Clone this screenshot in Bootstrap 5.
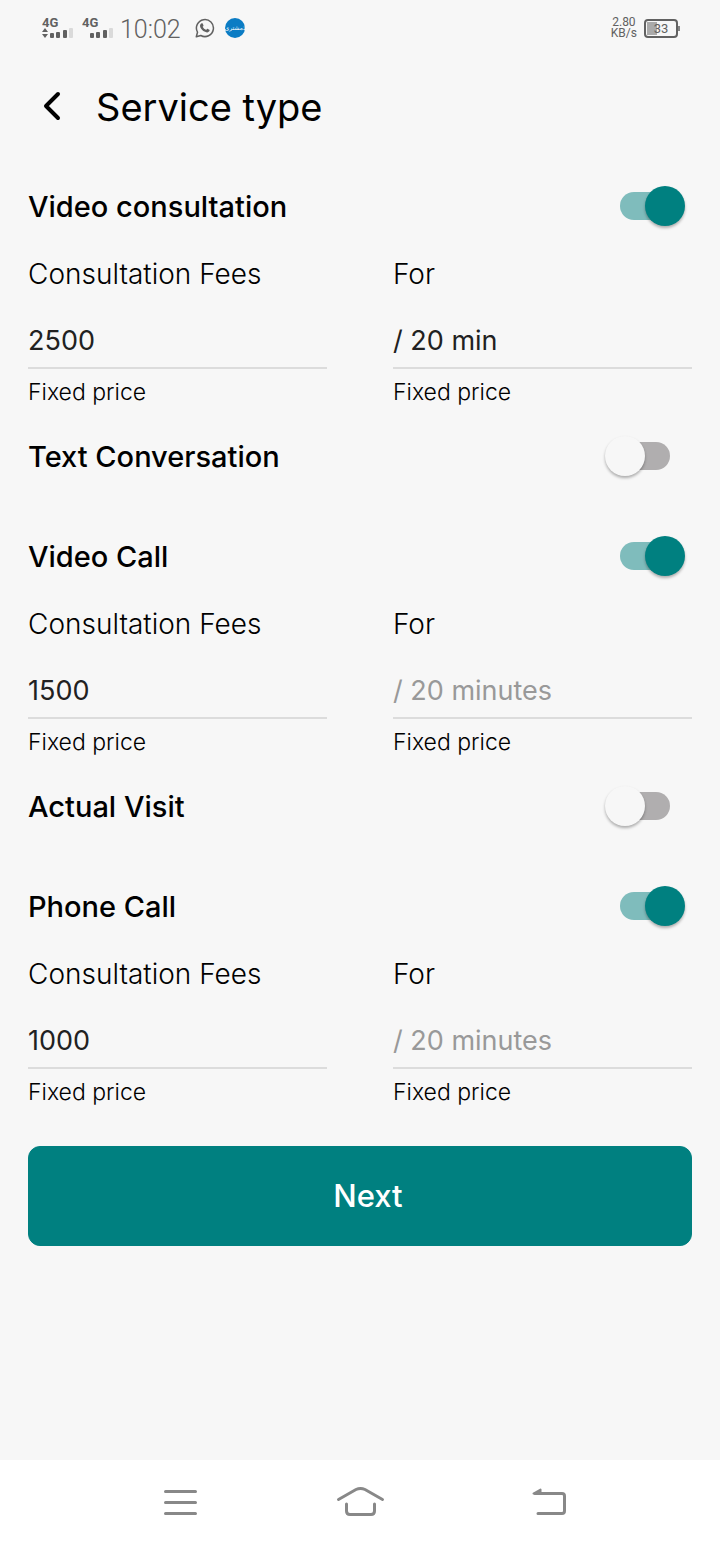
<!DOCTYPE html>
<html lang="en">
<head>
<meta charset="utf-8">
<meta name="viewport" content="width=device-width, initial-scale=1">
<title>Service type</title>
<link rel="stylesheet" href="https://cdn.jsdelivr.net/npm/bootstrap@5.3.0/dist/css/bootstrap.min.css">
<style>
  :root { --teal: #008080; --page: #f7f7f7; }
  body { background: var(--page); color: #000; font-family: Inter, sans-serif; }
  svg { display: block; flex: none; }

  .status-bar { height: 56px; padding: 0 40px 0 42px; color: #616161; font-family: Roboto, sans-serif; }
  .signals { gap: 8px; }
  .clock { font-size: 25px; line-height: 32px; margin: 3px 14px 0 6px; font-weight: 300; }
  .rate { font-size: 12px; line-height: 11px; }
  .battery { margin-left: 7px; }

  .top-bar { height: 100px; padding: 2px 40px 0; gap: 28px; }
  .top-bar h1 { font-size: 38px; line-height: 48px; font-weight: 400; }
  .back-btn { width: 28px; height: 48px; }

  .services { padding: 0 28px; }
  .service-head { height: 100px; }
  .service-head label { font-size: 29px; line-height: 36px; font-weight: 500; padding-top: 2px; }

  .toggle {
    appearance: none; display: grid; align-items: center; flex: none;
    width: 80px; height: 40px; margin: 0 7px 0 0; cursor: pointer;
  }
  .toggle::before, .toggle::after { content: ""; grid-area: 1 / 1; }
  .toggle::before { width: 50px; height: 28px; border-radius: 14px; background: #b0aeaf; justify-self: center; }
  .toggle::after {
    width: 40px; height: 40px; border-radius: 50%; background: var(--page);
    box-shadow: 0 2px 3px rgba(0, 0, 0, .3); justify-self: start;
  }
  .toggle:checked::before { background: #7fbcbc; }
  .toggle:checked::after { background: var(--teal); justify-self: end; }

  .fields { --bs-gutter-x: 66px; }
  .fields label { font-size: 28px; line-height: 37px; font-weight: 300; margin-bottom: 26px; }
  .fields input {
    height: 50px; padding: 0 0 6px; font-size: 27px; color: #212121;
    background: transparent; border: 0; border-bottom: 2px solid #dcdcdc; border-radius: 0;
  }
  .fields input:focus { background: transparent; box-shadow: none; border-color: var(--teal); }
  .fields input::placeholder { color: #999; }
  .helper { font-size: 23px; line-height: 27px; font-weight: 300; margin-top: 10px; }

  .next-btn {
    --bs-btn-bg: var(--teal); --bs-btn-border-color: var(--teal); --bs-btn-color: #fff;
    --bs-btn-hover-bg: #006d6d; --bs-btn-hover-color: #fff;
    height: 100px; margin-top: 40px; padding-left: 28px; border-radius: 12px; font-size: 31px; font-weight: 500;
  }

  .system-nav { height: 84px; padding: 0 90px; }
  .system-nav svg { fill: none; stroke: #888; stroke-width: 3; stroke-linecap: round; stroke-linejoin: round; }
</style>
</head>
<body>
<div class="d-flex flex-column min-vh-100">

  <div class="status-bar d-flex align-items-center">
    <div class="signals d-flex">
      <svg width="32" height="24" viewBox="0 0 32 24" fill="#616161">
        <text x="0" y="11" font-size="13" font-weight="700">4G</text>
        <path d="M0 16l3-4 3 4zM0 18h6l-3 4z"/>
        <rect x="8" y="17" width="4" height="5" rx="1"/><rect x="14" y="16" width="4" height="6" rx="1"/>
        <rect x="21" y="14" width="4" height="8" rx="1"/><rect x="27" y="12" width="4" height="10" rx="1" fill="#dadada"/>
      </svg>
      <svg width="32" height="24" viewBox="0 0 32 24" fill="#616161">
        <text x="0" y="11" font-size="13" font-weight="700">4G</text>
        <rect x="8" y="17" width="4" height="5" rx="1"/><rect x="14" y="16" width="4" height="6" rx="1"/>
        <rect x="21" y="14" width="4" height="8" rx="1"/><rect x="27" y="12" width="4" height="10" rx="1" fill="#dadada"/>
      </svg>
    </div>
    <span class="clock">10:02</span>
    <svg width="20" height="20" viewBox="0 0 20 20" fill="none" stroke="#616161" stroke-width="1.5">
      <path d="M1.3 18.7l1.2-4.5A8.5 8.5 0 1 1 5.8 17.5z" stroke-linejoin="round"/>
      <path fill="#616161" stroke="none" d="M6.9 5.3c.4 0 .7 0 .9.5l.7 1.7c.1.4-.5 1-.8 1.3.7 1.5 1.9 2.5 3.5 3.1.4-.4.8-1.2 1.2-1.1l1.9.9c.4.2.4.5.3.9-.3 1.2-1.5 1.9-2.6 1.8-3.5-.4-6.8-3.5-7-6.6 0-1.1.8-2.3 1.9-2.5z"/>
    </svg>
    <svg class="ms-2" width="24" height="22" viewBox="0 0 24 22">
      <circle cx="12" cy="11" r="10" fill="#0b7cc4"/>
      <text x="12" y="13" font-size="6" text-anchor="middle" fill="#fff" font-family="DejaVu Sans, sans-serif">ذمشتری</text>
    </svg>
    <div class="rate ms-auto text-center">2.80<br>KB/s</div>
    <svg class="battery" width="36" height="20" viewBox="0 0 36 20">
      <rect x="1" y="2" width="32" height="17" rx="3" fill="none" stroke="#616161" stroke-width="2"/>
      <rect x="3" y="4" width="10" height="13" fill="#aaa"/>
      <path d="M35 8v5" stroke="#616161" stroke-width="1.5"/>
      <text x="17" y="15" font-size="13" text-anchor="middle" fill="#616161">33</text>
    </svg>
  </div>

  <header class="top-bar d-flex align-items-center">
    <button type="button" class="back-btn btn p-0 border-0" aria-label="Back">
      <svg width="28" height="48" viewBox="0 0 28 48" fill="none" stroke="#000" stroke-width="4" stroke-linecap="round" stroke-linejoin="round"><path d="M18 11L6 23l12 12"/></svg>
    </button>
    <h1 class="m-0">Service type</h1>
  </header>

  <main class="services flex-grow-1">
    <section>
      <div class="service-head d-flex align-items-center justify-content-between">
        <label for="video-consult">Video consultation</label>
        <input class="toggle" type="checkbox" role="switch" id="video-consult" checked>
      </div>
      <div class="fields row">
        <div class="col-6">
          <label class="d-block" for="fee-1">Consultation Fees</label>
          <input class="form-control" id="fee-1" type="text" value="2500">
          <div class="helper">Fixed price</div>
        </div>
        <div class="col-6">
          <label class="d-block" for="for-1">For</label>
          <input class="form-control" id="for-1" type="text" value="/ 20 min">
          <div class="helper">Fixed price</div>
        </div>
      </div>
    </section>

    <section>
      <div class="service-head d-flex align-items-center justify-content-between">
        <label for="text-conv">Text Conversation</label>
        <input class="toggle" type="checkbox" role="switch" id="text-conv">
      </div>
    </section>

    <section>
      <div class="service-head d-flex align-items-center justify-content-between">
        <label for="video-call">Video Call</label>
        <input class="toggle" type="checkbox" role="switch" id="video-call" checked>
      </div>
      <div class="fields row">
        <div class="col-6">
          <label class="d-block" for="fee-2">Consultation Fees</label>
          <input class="form-control" id="fee-2" type="text" value="1500">
          <div class="helper">Fixed price</div>
        </div>
        <div class="col-6">
          <label class="d-block" for="for-2">For</label>
          <input class="form-control" id="for-2" type="text" placeholder="/ 20 minutes">
          <div class="helper">Fixed price</div>
        </div>
      </div>
    </section>

    <section>
      <div class="service-head d-flex align-items-center justify-content-between">
        <label for="visit">Actual Visit</label>
        <input class="toggle" type="checkbox" role="switch" id="visit">
      </div>
    </section>

    <section>
      <div class="service-head d-flex align-items-center justify-content-between">
        <label for="phone-call">Phone Call</label>
        <input class="toggle" type="checkbox" role="switch" id="phone-call" checked>
      </div>
      <div class="fields row">
        <div class="col-6">
          <label class="d-block" for="fee-3">Consultation Fees</label>
          <input class="form-control" id="fee-3" type="text" value="1000">
          <div class="helper">Fixed price</div>
        </div>
        <div class="col-6">
          <label class="d-block" for="for-3">For</label>
          <input class="form-control" id="for-3" type="text" placeholder="/ 20 minutes">
          <div class="helper">Fixed price</div>
        </div>
      </div>
    </section>

    <button type="button" class="next-btn btn w-100">Next</button>
  </main>

  <nav class="system-nav bg-white d-flex align-items-center" aria-label="System">
    <button type="button" class="btn p-0 border-0 flex-fill d-flex justify-content-center" aria-label="Recent apps">
      <svg width="60" height="40" viewBox="0 0 60 40"><path d="M15.5 9.5h30M15.5 20.5h30M15.5 31.5h30"/></svg>
    </button>
    <button type="button" class="btn p-0 border-0 flex-fill d-flex justify-content-center" aria-label="Home">
      <svg width="60" height="40" viewBox="0 0 60 40"><path d="M8.5 17.500L26 7.500q4.500-2.200 9 0l17.500 10M16.500 22v7q0 3.500 3.500 3.500h21q3.500 0 3.500-3.500v-7"/></svg>
    </button>
    <button type="button" class="btn p-0 border-0 flex-fill d-flex justify-content-center" aria-label="Go back">
      <svg width="60" height="40" viewBox="0 0 60 40"><path d="M25 11.500h27q2.500 0 2.500 2.500v15q0 2.500-2.500 2.500H28"/><path d="M23.500 11.500l7-4v4z" fill="#888" stroke-width="2"/></svg>
    </button>
  </nav>
</div>
<script src="https://cdn.jsdelivr.net/npm/bootstrap@5.3.0/dist/js/bootstrap.bundle.min.js"></script>
</body>
</html>
